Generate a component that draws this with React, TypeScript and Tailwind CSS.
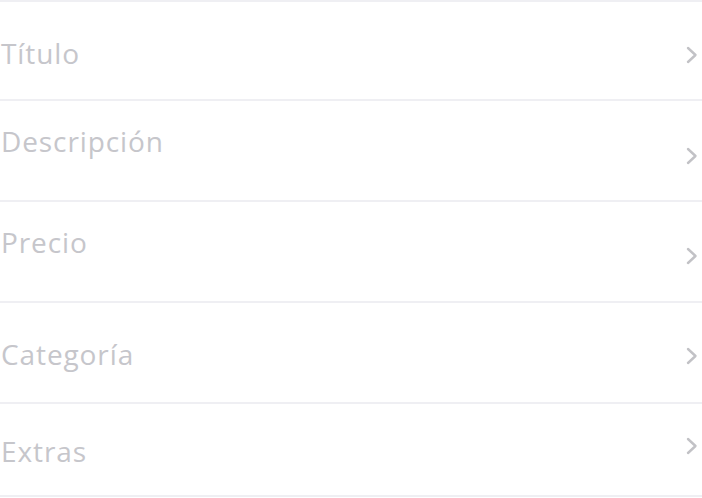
const ROWS = [
  { label: 'Título', h: 'h-[97px]', text: 'mt-[37px]', chev: 'mt-[43px]' },
  { label: 'Descripción', h: 'h-[99px]', text: 'mt-[26px]', chev: 'mt-[45px]' },
  { label: 'Precio', h: 'h-[99px]', text: 'mt-[26px]', chev: 'mt-[44px]' },
  { label: 'Categoría', h: 'h-[99px]', text: 'mt-[37px]', chev: 'mt-[43px]' },
  { label: 'Extras', h: 'h-[91px]', text: 'mt-[33px]', chev: 'mt-[32px]' },
]

function Chevron() {
  return (
    <svg width="13" height="20" viewBox="0 0 13 20" fill="none">
      <path d="M3 3 L10.5 10 L3 17" stroke="#c2c2c6" strokeWidth="2.4" strokeLinecap="round" strokeLinejoin="round" />
    </svg>
  )
}

export default function App() {
  return (
    <div className="w-[702px] h-[498px] bg-white border-t-2 border-[#efeff3] font-['Open_Sans',sans-serif]">
      {ROWS.map(r => (
        <div
          key={r.label}
          className={`${r.h} box-content flex items-start justify-between pl-[1px] pr-[4px] border-b-2 border-[#efeff3]`}
        >
          <span className={`${r.text} text-[28px] leading-[28px] font-normal tracking-[0.9px] text-[#c6c6cb]`}>
            {r.label}
          </span>
          <span className={r.chev}>
            <Chevron />
          </span>
        </div>
      ))}
    </div>
  )
}
